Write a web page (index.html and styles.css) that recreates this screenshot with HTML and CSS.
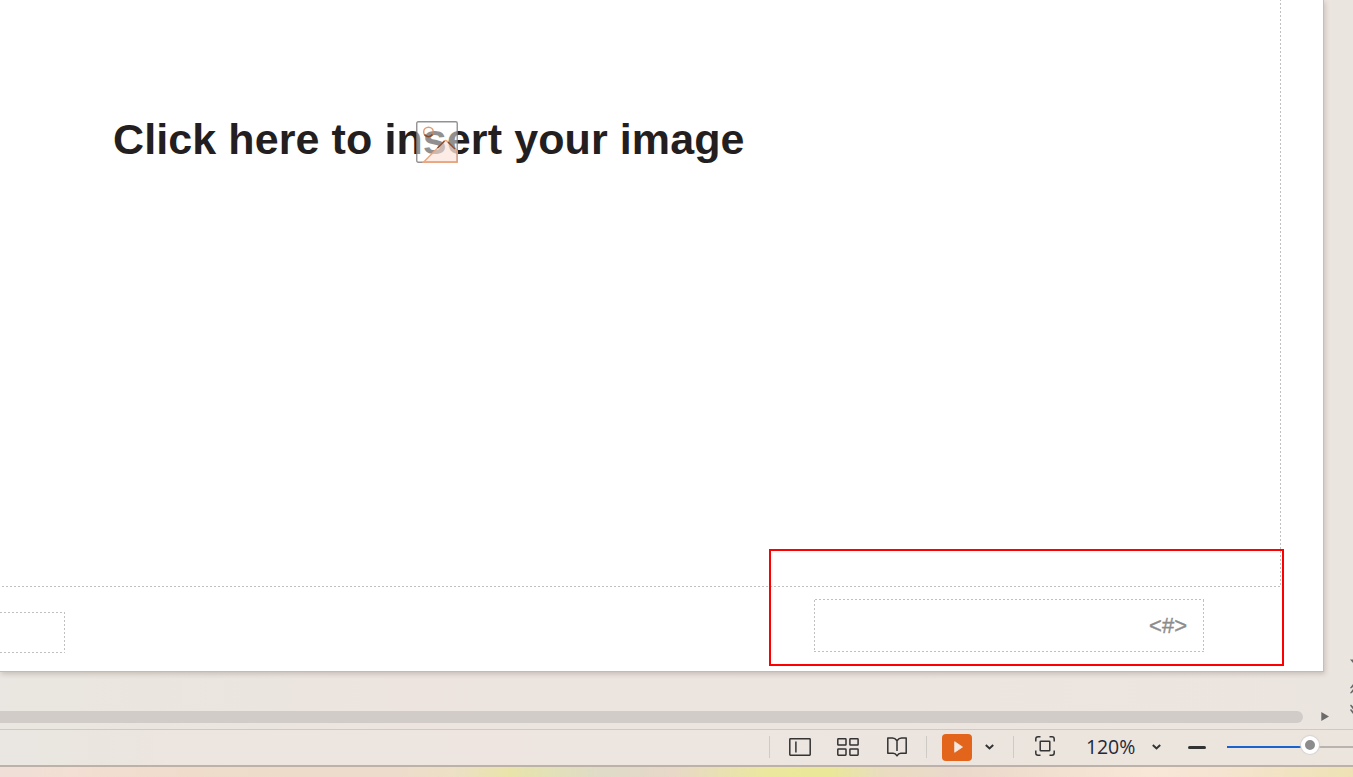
FILE: index.html
```html
<!DOCTYPE html>
<html lang="en">
<head>
<meta charset="utf-8">
<title>Slide master</title>
<link rel="stylesheet" href="styles.css">
</head>
<body>
<div class="app">
  <main class="workspace">
    <section class="slide">
      <div class="frame frame-content"></div>
      <h1 class="slide-title">Click here to insert your image</h1>
      <svg class="picture-icon" width="42" height="42" viewBox="0 0 42 42" fill="none">
        <rect x=".75" y=".75" width="40.5" height="40.5" rx="1.5" fill="#fff" fill-opacity=".5"/>
        <path d="M7.5 41 28.5 20q1.200-1.200 2.400 0L41 30v11z" fill="#fbdccf" fill-opacity=".55"/>
        <rect x=".75" y=".75" width="40.500" height="40.500" rx="1.500" stroke="#777" stroke-opacity=".8" stroke-width="1.400"/>
        <circle cx="12.500" cy="11" r="4.800" stroke="#dc824f" stroke-opacity=".8" stroke-width="1.500"/>
        <path d="M7.500 41.200 28.500 20q1.200-1.200 2.400 0L41.200 30v11.200z" stroke="#e9a680" stroke-width="1.400"/>
        <path d="M21.500 27 28.500 20M32 21l7 7M8.500 13.500a4.800 4.800 0 0 0 8 0" stroke="#70391d" stroke-opacity=".8" stroke-width="1.500"/>
      </svg>
      <div class="frame frame-footer"></div>
      <div class="frame frame-number"><span>&lt;#&gt;</span></div>
      <div class="highlight"></div>
    </section>
    <div class="scroll-row">
      <div class="scroll-thumb"></div>
      <svg class="scroll-next" width="8" height="9" viewBox="0 0 8 9"><path d="M.3 0 8 4.500.3 9z" fill="#6b6b6b"/></svg>
    </div>
    <svg class="page-arrows" width="3" height="60" viewBox="0 0 3 60" fill="#686868">
      <path d="M0 3.500h3v3.500zM0 32l3-4v3l-2 1.500zM0 37l3-4v3l-2 1.500zM0 49.500l1-1 2 2v3zM0 54l1-1 2 2v3z"/>
    </svg>
  </main>
  <footer class="status-bar">
    <span class="divider"></span>
    <svg class="normal-view" width="22" height="18" viewBox="0 0 22 18" fill="none" stroke="#333" stroke-width="1.500">
      <rect x=".8" y=".8" width="20.400" height="16.400" rx=".6"/><path d="M6.900 3.500v11"/>
    </svg>
    <svg class="grid-view" width="22" height="18" viewBox="0 0 22 18" fill="none" stroke="#333" stroke-width="1.500">
      <rect x=".8" y=".8" width="8.200" height="6.200" rx=".6"/><rect x="12.900" y=".8" width="8.200" height="6.200" rx=".6"/><rect x=".8" y="11" width="8.200" height="6.200" rx=".6"/><rect x="12.900" y="11" width="8.200" height="6.200" rx=".6"/>
    </svg>
    <svg class="read-view" width="20" height="20" viewBox="0 0 20 20" fill="none" stroke="#333" stroke-width="1.500" stroke-linejoin="round">
      <path d="M10 3.800Q8 1 5.500 1H.8v15.200h5.400q2.300 0 3.800 2.600 1.500-2.600 3.800-2.600h5.400V1h-4.700Q12 1 10 3.800zV14"/>
    </svg>
    <span class="divider"></span>
    <button class="play" aria-label="Play"><svg width="9" height="12" viewBox="0 0 9 12"><path d="M.7.700 8.500 6 .7 11.300z" fill="#f4e9e2" stroke="#f4e9e2" stroke-width=".8" stroke-linejoin="round"/></svg></button>
    <svg class="play-menu" width="9" height="6" viewBox="0 0 9 6" fill="none" stroke="#333" stroke-width="2"><path d="m.8 1 3.700 3.400L8.200 1"/></svg>
    <span class="divider"></span>
    <svg class="fit" width="20" height="20" viewBox="0 0 20 20" fill="none" stroke="#333" stroke-width="1.500">
      <path d="M.8 5.500V3Q.8.800 3 .8h2.500M14.500.8H17q2.200 0 2.200 2.200v2.500M19.200 14.500V17q0 2.200-2.200 2.200h-2.500M5.500 19.200H3Q.8 19.200.8 17v-2.500"/><rect x="5.200" y="5.200" width="9.600" height="9.600" rx=".6"/>
    </svg>
    <span class="zoom-value">120%</span>
    <svg class="zoom-menu" width="9" height="6" viewBox="0 0 9 6" fill="none" stroke="#333" stroke-width="2"><path d="m.8 1 3.700 3.400L8.200 1"/></svg>
    <span class="minus"></span>
    <div class="zoom-track"><span class="zoom-knob"></span></div>
  </footer>
  <div class="wallpaper"></div>
</div>
</body>
</html>
```
FILE: styles.css
```css
* { box-sizing: border-box; }
body { margin: 0; overflow: hidden; font-family: "Liberation Sans", Arial, sans-serif; }
.app { width: 1353px; height: 777px; display: flex; flex-direction: column; overflow: hidden; background: #ece5df; }
.workspace {
  position: relative;
  height: 729px;
  background: linear-gradient(90deg, #eae6e1 0, #eae6df 150px, #ede4df 400px, #ece4df 850px, #ebe5e0 1353px);
}
.slide {
  position: relative;
  width: 1324px;
  height: 672px;
  background: #fff;
  border-right: 1px solid #c3c0bc;
  border-bottom: 1px solid #bfbbb7;
  box-shadow: 1px 2px 5px rgba(70, 50, 40, .22);
}
.slide-title {
  position: absolute;
  left: 113px;
  top: 114px;
  margin: 0;
  font-size: 43px;
  line-height: 50px;
  letter-spacing: .1px;
  white-space: nowrap;
  color: #231f20;
}
.picture-icon { position: absolute; left: 416px; top: 121px; }

/* 2px-on, 2px-off placeholder outlines */
.frame {
  --dash-x: repeating-linear-gradient(90deg, #c0c0c0 0 2px, transparent 2px 4px);
  --dash-y: repeating-linear-gradient(180deg, #c0c0c0 0 2px, transparent 2px 4px);
  position: absolute;
  background-repeat: no-repeat;
}
.frame-content {
  left: -2px;
  top: -1px;
  width: 1283px;
  height: 588px;
  background-image: var(--dash-x), var(--dash-y);
  background-position: left bottom, right top;
  background-size: 100% 1px, 1px 100%;
}
.frame-footer {
  left: 0;
  top: 612px;
  width: 65px;
  height: 41px;
  background-image: var(--dash-x), var(--dash-x), var(--dash-y);
  background-position: left top, left bottom, right top;
  background-size: 100% 1px, 100% 1px, 1px 100%;
}
.frame-number {
  left: 814px;
  top: 599px;
  width: 390px;
  height: 53px;
  display: flex;
  align-items: center;
  justify-content: flex-end;
  padding-right: 17px;
  background-image: var(--dash-x), var(--dash-x), var(--dash-y), var(--dash-y);
  background-position: 1px 0, left bottom, 0 1px, right 1px;
  background-size: 100% 1px, 100% 1px, 1px 100%, 1px 100%;
  font-size: 22px;
  color: #8c8c8c;
  -webkit-text-stroke: .4px #8c8c8c;
}
.highlight { position: absolute; left: 769px; top: 549px; width: 515px; height: 117px; border: 2px solid #f00; }

.scroll-row { display: flex; align-items: center; height: 12px; margin-top: 39px; }
.scroll-thumb { width: 1303px; height: 12px; border-radius: 0 6px 6px 0; background: #d1ccc7; }
.scroll-next { margin: 0 0 1px 18px; }
.page-arrows { position: absolute; right: 0; top: 656px; }

.status-bar {
  display: flex;
  align-items: center;
  height: 38px;
  padding-bottom: 1px;
  border-top: 1px solid #cdc9c4;
  border-bottom: 2px solid #bcb2a9;
  background: linear-gradient(90deg, #eae6e2 0, #eae6df 100px, #ede5df 165px, #eee5e0 500px, #ece5df 960px, #ebe5de 1353px);
}
.status-bar > * { flex: none; }
.divider { width: 1px; height: 22px; background: #d0cac5; }
.status-bar > .divider:first-child { margin-left: 769px; }
.normal-view { margin-left: 19px; }
.grid-view { margin-left: 26px; }
.read-view { margin: 0 19px 0 28px; }
.play {
  display: flex;
  align-items: center;
  justify-content: center;
  width: 30px;
  height: 27px;
  margin-left: 15px;
  padding: 0 0 0 2px;
  border: 0;
  border-radius: 4px;
  background: #e2651b;
}
.play-menu { margin: 0 19px 0 13px; }
.fit { margin: 0 0 2px 21px; }
.zoom-value { width: 50px; margin-left: 31px; font: 19.5px/28px "Open Sans", "Noto Sans", sans-serif; letter-spacing: -.1px; color: #25283a; }
.zoom-menu { margin-left: 16px; }
.minus { width: 18px; height: 3px; margin-left: 27px; border-radius: 1.5px; background: #333; }
.zoom-track { position: relative; width: 126px; height: 2px; margin-left: 21px; background: linear-gradient(90deg, #1963ce 82px, #b8b3af 82px); }
.zoom-knob {
  position: absolute;
  left: 74px;
  top: -10px;
  width: 18px;
  height: 18px;
  border: 4px solid #fff;
  border-radius: 50%;
  background: #8c8c8c;
  box-shadow: 0 0 1px 1px #d8d3cf;
}
.wallpaper {
  height: 10px;
  background: linear-gradient(90deg, #efdfd8 0, #f3dfd3 70px, #efdccb 190px, #eddccb 400px, #ece0c5 455px, #e9e3aa 510px, #e2e1b8 550px, #dfdbc8 600px, #e7d8c9 670px, #e9dfb6 715px, #ebe79e 765px, #eae798 830px, #e9ddc0 880px, #ead9cb 950px, #f1dfcf 1050px, #f8e6d7 1150px, #f5e4d1 1220px, #f0e3bf 1300px, #eee2b5 1353px);
}
```
